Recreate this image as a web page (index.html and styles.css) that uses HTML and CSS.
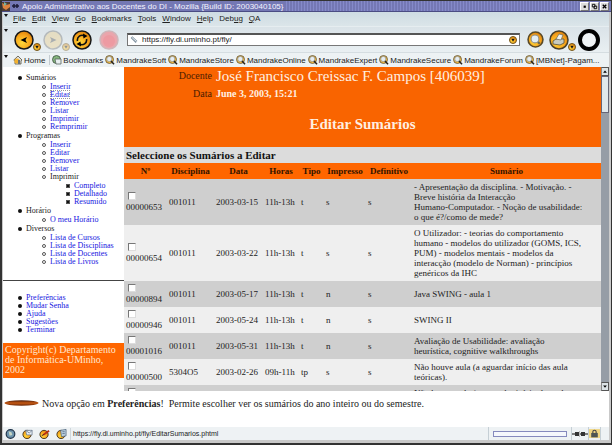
FILE: index.html
```html
<!DOCTYPE html>
<html lang="pt">
<head>
<meta charset="utf-8">
<title>Apoio Administrativo aos Docentes do DI</title>
<link rel="stylesheet" href="styles.css">
</head>
<body>
<svg class="defs" aria-hidden="true">
  <defs>
    <radialGradient id="gold" cx="40%" cy="65%" r="70%"><stop offset="0" stop-color="#ffd83a"/><stop offset=".6" stop-color="#f7a51c"/><stop offset="1" stop-color="#d97b08"/></radialGradient>
    <linearGradient id="ember" x1="0" y1="0" x2="0" y2="1"><stop offset="0" stop-color="#4a1a08"/><stop offset=".5" stop-color="#c85a14"/><stop offset="1" stop-color="#6b2808"/></linearGradient>
    <symbol id="mag" viewBox="0 0 10 10"><circle cx="4.500" cy="4.500" r="4" fill="#f6b93a" stroke="#5c5340" stroke-width=".8"/><circle cx="4.300" cy="4" r="2.600" fill="#e6edf2" stroke="#8d8f86" stroke-width=".7"/><path d="M6 6l3 3.200" stroke="#28241c" stroke-width="1.600"/></symbol>
    <symbol id="drop" viewBox="0 0 8 8"><circle cx="4" cy="4" r="3.500" fill="url(#gold)" stroke="#6f5520"/><path d="M2.300 2.800h3.400L4 5.800z" fill="#151515"/></symbol>
  </defs>
</svg>
<div class="window">
  <header class="titlebar">
    <svg class="app" viewBox="0 0 18 10"><rect width="8" height="9" y="1" fill="#4d3b32"/><path d="M0 2l4 2 4-1v3L4 9 1 7z" fill="#dc8340"/><path d="M2 1l3 2-3 2z" fill="#79b3a0"/><path d="M10 5h7M12 3v4M15 3v4" stroke="#1c1c38" stroke-width="1.500"/></svg>
    <span class="caption">Apoio Administrativo aos Docentes do DI - Mozilla {Build ID: 2003040105}</span>
    <span class="grip"></span>
    <button class="wbtn" aria-label="Minimizar"><svg viewBox="0 0 8 8"><path d="M3 3h2.500v2.500H3z"/></svg></button>
    <button class="wbtn" aria-label="Restaurar"><svg viewBox="0 0 8 8"><path d="M1.500 1.500h3v3h-3zM3.500 3.500h3v3h-3z" fill="none" stroke="#000"/></svg></button>
    <button class="wbtn" aria-label="Fechar"><svg viewBox="0 0 8 8"><path d="M2 2l4 4M6 2L2 6" stroke="#000" stroke-width="1.500"/></svg></button>
  </header>
  <nav class="menubar">
    <span class="handle"></span>
    <button><u>F</u>ile</button><button><u>E</u>dit</button><button><u>V</u>iew</button><button><u>G</u>o</button><button><u>B</u>ookmarks</button><button><u>T</u>ools</button><button><u>W</u>indow</button><button><u>H</u>elp</button><button>Deb<u>u</u>g</button><button><u>Q</u>A</button>
  </nav>
  <div class="toolbar">
    <span class="handle"></span>
    <button class="round" aria-label="Voltar"><svg viewBox="0 0 20 20"><circle cx="10" cy="10" r="9" fill="url(#gold)" stroke="#171717" stroke-width="1.500"/><path d="M6.500 10l6.500-3-1.500 3 1.500 3z"/></svg></button>
    <button class="mini" aria-label="Histórico anterior"><svg viewBox="0 0 8 8"><use href="#drop"/></svg></button>
    <button class="round faded" aria-label="Avançar"><svg viewBox="0 0 20 20"><circle cx="10" cy="10" r="9" fill="#efd08a" stroke="#777" stroke-width="1.500"/><path d="M13.500 10L7 7l1.500 3L7 13z" fill="#555"/></svg></button>
    <button class="mini faded" aria-label="Histórico seguinte"><svg viewBox="0 0 8 8"><use href="#drop"/></svg></button>
    <button class="round" aria-label="Recarregar"><svg viewBox="0 0 20 20"><circle cx="10" cy="10" r="9" fill="url(#gold)" stroke="#171717" stroke-width="1.500"/><path d="M5.500 11a4.700 4.700 0 0 1 7-5M14.500 9a4.700 4.700 0 0 1-7 5" fill="none" stroke="#111" stroke-width="1.600"/><path d="M11 3.500l4.500 2.500-4 2.500zM9 16.500L4.500 14l4-2.500z"/></svg></button>
    <button class="round stop" aria-label="Parar"><svg viewBox="0 0 20 20"><circle cx="10" cy="10" r="9" fill="#ee9098" stroke="#c9a5a9" stroke-width="1.500"/><circle cx="10" cy="11" r="6" fill="#f18089"/></svg></button>
    <div class="urlbar">
      <svg viewBox="0 0 8 8"><path d="M1.500 1.200L6.500 6" stroke="#8293a0" stroke-width="2.500"/><path d="M2 1.500l4.500 4" stroke="#e5edf2"/></svg>
      <input type="text" aria-label="Endereço" value="https://fly.di.uminho.pt/fly/">
      <button aria-label="Endereços recentes"><svg viewBox="0 0 8 8"><use href="#drop"/></svg></button>
    </div>
    <button class="search" aria-label="Procurar"><svg viewBox="0 0 16 16"><circle cx="8" cy="8" r="7" fill="url(#gold)" stroke="#5a4a28" stroke-width="1.500"/><path d="M10 10l2 2" stroke="#665" stroke-width="2"/><circle cx="7.500" cy="7.500" r="3.700" fill="#e3edf4" stroke="#8e8b80"/></svg></button>
    <button class="round" aria-label="Imprimir"><svg viewBox="0 0 20 20"><circle cx="10" cy="10" r="9" fill="url(#gold)" stroke="#4a4028" stroke-width="1.500"/><path d="M4 11l3-2 8 0v4l-4 2-7-1z" fill="#c8cbbf" stroke="#57503c" stroke-width=".8"/><path d="M7 9l3-5 4 1-2 5z" fill="#eef1ed" stroke="#6c6654" stroke-width=".7"/></svg></button>
    <button class="mini" aria-label="Opções de impressão"><svg viewBox="0 0 8 8"><use href="#drop"/></svg></button>
    <svg class="throbber" viewBox="0 0 24 24"><circle cx="12" cy="12" r="9" fill="#eff3f5" stroke="#000" stroke-width="4"/></svg>
  </div>
  <nav class="bookmarks">
    <span class="handle"></span>
    <a href="#" class="home"><svg viewBox="0 0 10 10"><path d="M.8 5L5 1l4 4-1 .7V9H2V5.500z" fill="#dfe2e0" stroke="#55503f" stroke-width=".8"/><circle cx="4" cy="6" r="2.600" fill="#f2b12f"/><path d="M5 5h2v4H5z" fill="#69737c"/></svg>Home</a>
    <a href="#" class="marks"><svg viewBox="0 0 10 10"><circle cx="4.500" cy="4.500" r="4" fill="#84b57d" stroke="#3e5141" stroke-width=".8"/><path d="M3 4h6v5H4z" fill="#e8eef0" stroke="#59665f" stroke-width=".8"/></svg>Bookmarks</a>
    <a href="#"><svg><use href="#mag"/></svg>MandrakeSoft</a>
    <a href="#"><svg><use href="#mag"/></svg>MandrakeStore</a>
    <a href="#"><svg><use href="#mag"/></svg>MandrakeOnline</a>
    <a href="#"><svg><use href="#mag"/></svg>MandrakeExpert</a>
    <a href="#"><svg><use href="#mag"/></svg>MandrakeSecure</a>
    <a href="#"><svg><use href="#mag"/></svg>MandrakeForum</a>
    <a href="#"><svg><use href="#mag"/></svg>[MBNet]-Pagam...</a>
  </nav>
  <div class="content">
    <aside class="side">
      <ul class="tree">
        <li>Sumários
          <ul><li><a href="#">Inserir</a></li><li><a href="#" class="current">Editar</a></li><li><a href="#">Remover</a></li><li><a href="#">Listar</a></li><li><a href="#">Imprimir</a></li><li><a href="#">Reimprimir</a></li></ul></li>
        <li>Programas
          <ul><li><a href="#">Inserir</a></li><li><a href="#">Editar</a></li><li><a href="#">Remover</a></li><li><a href="#">Listar</a></li><li>Imprimir
            <ul><li><a href="#">Completo</a></li><li><a href="#">Detalhado</a></li><li><a href="#">Resumido</a></li></ul></li></ul></li>
        <li>Horário
          <ul><li><a href="#">O meu Horário</a></li></ul></li>
        <li>Diversos
          <ul><li><a href="#">Lista de Cursos</a></li><li><a href="#">Lista de Disciplinas</a></li><li><a href="#">Lista de Docentes</a></li><li><a href="#">Lista de Livros</a></li></ul></li>
      </ul>
      <ul class="tree options">
        <li><a href="#">Preferências</a></li><li><a href="#">Mudar Senha</a></li><li><a href="#">Ajuda</a></li><li><a href="#">Sugestões</a></li><li><a href="#">Terminar</a></li>
      </ul>
      <p class="copyright">Copyright(c) Departamento de Informática-UMinho, 2002</p>
    </aside>
    <main class="main">
      <div class="banner">
        <dl>
          <dt>Docente</dt><dd>José Francisco Creissac F. Campos [406039]</dd>
          <dt>Data</dt><dd class="date">June 3, 2003, 15:21</dd>
        </dl>
        <h1>Editar Sumários</h1>
      </div>
      <h2>Seleccione os Sumários a Editar</h2>
      <table>
        <colgroup><col class="c-num"><col class="c-disc"><col class="c-date"><col class="c-hour"><col class="c-type"><col class="c-print"><col class="c-final"><col></colgroup>
        <thead><tr><th>Nº</th><th>Disciplina</th><th>Data</th><th>Horas</th><th>Tipo</th><th>Impresso</th><th>Definitivo</th><th>Sumário</th></tr></thead>
        <tbody>
          <tr><td><label><input type="checkbox">00000653</label></td><td>001011</td><td>2003-03-15</td><td>11h-13h</td><td>t</td><td>s</td><td>s</td><td>- Apresentação da disciplina. - Motivação. -<br>Breve história da Interacção<br>Humano-Computador. - Noção de usabilidade:<br>o que é?/como de mede?</td></tr>
          <tr><td><label><input type="checkbox">00000654</label></td><td>001011</td><td>2003-03-22</td><td>11h-13h</td><td>t</td><td>s</td><td>s</td><td>O Utilizador: - teorias do comportamento<br>humano - modelos do utilizador (GOMS, ICS,<br>PUM) - modelos mentais - modelos da<br>interacção (modelo de Norman) - princípios<br>genéricos da IHC</td></tr>
          <tr><td><label><input type="checkbox">00000894</label></td><td>001011</td><td>2003-05-17</td><td>11h-13h</td><td>t</td><td>n</td><td>s</td><td>Java SWING - aula 1</td></tr>
          <tr><td><label><input type="checkbox">00000946</label></td><td>001011</td><td>2003-05-24</td><td>11h-13h</td><td>t</td><td>n</td><td>s</td><td>SWING II</td></tr>
          <tr><td><label><input type="checkbox">00001016</label></td><td>001011</td><td>2003-05-31</td><td>11h-13h</td><td>t</td><td>n</td><td>s</td><td>Avaliação de Usabilidade: avaliação<br>heurística, cognitive walkthroughs</td></tr>
          <tr><td><label><input type="checkbox">00000500</label></td><td>5304O5</td><td>2003-02-26</td><td>09h-11h</td><td>tp</td><td>s</td><td>s</td><td>Não houve aula (a aguardar início das aula<br>teóricas).</td></tr>
          <tr class="next"><td><label><input type="checkbox" aria-label="Sumário seguinte"></label></td><td></td><td></td><td></td><td></td><td></td><td></td><td>Não houve aula (a aguardar início das aula</td></tr>
        </tbody>
      </table>
    </main>
    <div class="scrollbar">
      <button aria-label="Subir"><svg viewBox="0 0 8 8"><path d="M1.500 5.500L4 2.500l2.500 3z"/></svg></button>
      <div class="thumb"></div>
      <div class="track"></div>
      <button aria-label="Descer"><svg viewBox="0 0 8 8"><path d="M1.500 2.500L4 5.500l2.500-3z"/></svg></button>
    </div>
  </div>
  <p class="notice"><svg viewBox="0 0 36 6"><ellipse cx="18" cy="3" rx="17.500" ry="2.800" fill="url(#ember)"/></svg><span>Nova opção em <b>Preferências</b>!</span><span>Permite escolher ver os sumários do ano inteiro ou do semestre.</span></p>
  <footer class="status">
    <div class="launch">
      <button aria-label="Navegador"><svg viewBox="0 0 12 12"><circle cx="6" cy="6" r="4.700" fill="#6d94ad" stroke="#20344a" stroke-width="1.300"/><path d="M4 3l3 1 1 3-3 1z" fill="#c8d7c5"/></svg></button>
      <button aria-label="Correio"><svg viewBox="0 0 12 12"><circle cx="5.500" cy="6.500" r="4.500" fill="url(#gold)" stroke="#3d3520"/><path d="M4 2h7v5H5z" fill="#e9eff5" stroke="#627388" stroke-width=".8"/><path d="M4 2l4 3 3-3" fill="none" stroke="#627388" stroke-width=".8"/></svg></button>
      <button aria-label="Compositor"><svg viewBox="0 0 12 12"><circle cx="5.500" cy="6.500" r="4.500" fill="url(#gold)" stroke="#3d3520"/><path d="M4.500 7L11 2.500" stroke="#b92d12" stroke-width="2"/><path d="M3 8l2-1.500" stroke="#222"/></svg></button>
      <button aria-label="Contactos"><svg viewBox="0 0 12 12"><circle cx="5.500" cy="6.500" r="4.500" fill="url(#gold)" stroke="#3d3520"/><path d="M5 2l6-1v7l-5 1z" fill="#b9cfe0" stroke="#4b6278" stroke-width=".8"/><path d="M7 3.500h2.500M7 5.500h2.500" stroke="#4b6278" stroke-width=".8"/></svg></button>
    </div>
    <span class="address">https://fly.di.uminho.pt/fly/EditarSumarios.phtml</span>
    <div class="meter"><span></span></div>
    <div class="net"><svg viewBox="0 0 16 8"><path d="M0 4h16" stroke="#555" stroke-width="1.500"/><path d="M3 2h4v4H3zM9 2h4v4H9z" fill="#333"/><path d="M7.500 1v6" stroke="#bbb"/></svg></div>
    <div class="lock"><svg viewBox="0 0 10 8"><rect width="10" height="8" fill="#f0d580"/><path d="M3.500 4V2.500a1.500 1.500 0 0 1 3 0V4" fill="none" stroke="#444"/><path d="M2 3.500h6v4H2z" fill="#4e5452"/></svg></div>
    <div class="corner"></div>
  </footer>
</div>
</body>
</html>
```
FILE: styles.css
```css
* { box-sizing: border-box; }
body { margin: 0; font-family: "Liberation Serif", serif; background: #fff; color: #222; }
button { border: 0; padding: 0; margin: 0; background: none; font: inherit; color: inherit; }
a { text-decoration: none; color: inherit; }
svg { display: block; flex: none; }
ul { list-style: none; margin: 0; padding: 0; }
.defs { position: absolute; width: 0; height: 0; }

.window {
  display: flex; flex-direction: column; height: 100vh;
  border: solid #333; border-width: 1px 1px 2px 2px;
  overflow: hidden; background: #c9c9c9;
  padding: 0 2px 3px 1px;
}

.titlebar {
  display: flex; align-items: center; flex: none; height: 11px; margin: 0 -2px 0 -1px; padding-right: 2px;
  background: #7478b4; color: #f4f4ff; font: 8px/11px "Liberation Sans", sans-serif;
  border-bottom: 1px solid #4a4c83;
}
.app { width: 18px; height: 10px; margin-right: 2px; }
.caption { white-space: nowrap; }
.grip {
  flex: 1; align-self: stretch; margin-left: 3px;
  background: repeating-linear-gradient(90deg, #858aca 0 1px, transparent 1px 3px), #7478b4;
}
.wbtn { width: 9px; height: 9px; margin-left: 1px; background: #dcdcdc; border: 1px solid #777; border-top-color: #fff; border-left-color: #fff; }
.wbtn svg { width: 7px; height: 7px; }

.menubar, .toolbar, .bookmarks { display: flex; align-items: center; flex: none; font-family: "Liberation Sans", sans-serif; color: #222; }
.handle { align-self: flex-start; margin: 2px 6px 0 1px; border: 2px solid transparent; border-top: 3px solid #111; border-bottom: 0; }
.menubar { height: 14px; padding-bottom: 1px; font-size: 8px; background: linear-gradient(#cedce3, #dbe5e9); gap: 6px; }
.menubar .handle { margin-right: -1px; }
.toolbar { height: 26px; background: linear-gradient(#dae3e8, #e9eff2); border-top: 1px solid #e6edf0; }
.bookmarks { height: 15px; font-size: 8px; background: #edf2f4; border-top: 1px solid #d5dde1; gap: 2px; white-space: nowrap; overflow: hidden; }
.bookmarks .handle { margin-right: 3px; }

.round, .round svg { width: 20px; height: 20px; }
.round { margin-left: 2px; }
.toolbar .handle + .round { margin-left: 0; }
.mini, .mini svg { width: 8px; height: 8px; }
.mini { align-self: flex-end; margin-bottom: 1px; margin-left: -1px; }
.faded { opacity: .4; }
.stop { opacity: .75; margin-left: 7px; }
.urlbar {
  display: flex; align-items: center; flex: 1; height: 13px; margin: 0 7px 0 8px; padding: 0 2px;
  background: #fff; border: 1px solid #777; border-top: 2px solid #555;
}
.urlbar svg { width: 8px; height: 8px; }
.urlbar input { flex: 1; min-width: 0; border: 0; padding: 0 0 0 4px; height: 10px; background: none; font: 8px/10px "Liberation Sans", sans-serif; color: #222; outline: 0; }
.search, .search svg { width: 17px; height: 17px; }
.search { margin-right: 3px; }
.throbber { width: 24px; height: 24px; margin: 0 8px 0 1px; }

.bookmarks a { display: flex; align-items: center; gap: 1px; }
.bookmarks svg { width: 10px; height: 10px; }
.home { padding-right: 4px; border-right: 1px solid #c3cbd0; }

.content { display: flex; flex: 1; min-height: 0; background: #fff; }

.side { flex: none; width: 121px; overflow: hidden; font-size: 8px; line-height: 8px; }
.tree { padding: 7px 0 13px 23px; }
.tree li::before {
  content: ""; float: left; box-sizing: border-box; width: 4px; height: 4px; margin: 2px 0 0 -8px; border-radius: 2px; background: #111;
}
.tree ul { margin: 1px 0; padding-left: 24px; }
.tree ul li::before { background: none; border: 1px solid #555; }
.tree ul ul li::before { background: #111; border-radius: 0; }
.tree a { color: #1616e0; }
.tree .current { outline: 1px dotted #999; outline-offset: -1px; }
.options { border-top: 1px solid #444; padding: 13px 0 9px 23px; }
.copyright { margin: 0; padding: 2px 3px 3px 2px; background: #ff6600; color: #ffe6cf; font-size: 10px; line-height: 10px; }

.main { flex: 1; min-width: 0; overflow: hidden; background: #dcdcdc; }
.banner { height: 80px; background: #f96400; }
dl { display: grid; grid-template-columns: 88px 1fr; column-gap: 4px; align-items: center; margin: 0; line-height: 18px; }
dt { text-align: right; font-size: 10px; color: #4b1c00; }
dd { margin: 0; font-size: 15px; color: #fff0e2; white-space: nowrap; }
dd.date { font-size: 10px; font-weight: bold; }
h1 { margin: 12px 0 0; text-align: center; font-size: 15px; line-height: 18px; color: #ffefe0; }
h2 { margin: 0; padding-left: 2px; font-size: 11px; line-height: 16px; color: #111; }

table { width: 100%; table-layout: fixed; border-collapse: collapse; font-size: 9px; line-height: 10px; }
.c-num { width: 43px; } .c-disc { width: 47px; } .c-date { width: 49px; } .c-hour { width: 36px; }
.c-type { width: 25px; } .c-print { width: 42px; } .c-final { width: 46px; }
th { padding: 3px 0; background: #ff6600; color: #331400; }
td { padding: 3px 0 3px 2px; white-space: nowrap; }
tbody tr { background: #efefef; }
tbody tr:nth-child(odd) { background: #cfcfcf; }
.next td { vertical-align: top; }
td label { display: block; }
td input { appearance: none; display: block; width: 8px; height: 8px; margin: 0 0 2px 2px; background: #fff; border: 1px solid #ddd; border-top-color: #777; border-left-color: #777; }

.scrollbar { display: flex; flex-direction: column; flex: none; width: 8px; background: #969da6; }
.scrollbar button { width: 8px; height: 9px; background: #dce3e6; border: 1px solid #555; border-left-color: #888; }
.scrollbar button svg { width: 6px; height: 7px; }
.thumb { height: 37px; background: #e0e8eb; border: 1px solid #667; }
.track { flex: 1; }

.notice { display: flex; align-items: center; gap: 3px; flex: none; height: 36px; margin: 0; padding: 0 0 12px 1px; background: #fff; font-size: 10px; white-space: nowrap; }
.notice svg { width: 35px; height: 6px; }
.notice span + span { margin-left: 2px; }

.status { display: flex; align-items: center; flex: none; height: 13px; background: #eef2f4; font: 7px/13px "Liberation Sans", sans-serif; }
.launch { display: flex; gap: 6px; padding: 0 3px 0 2px; border-right: 1px solid #cfd7db; }
.launch svg { width: 11px; height: 12px; }
.address { flex: 1; padding-left: 2px; }
.meter, .net, .lock { display: flex; align-items: center; align-self: stretch; border-left: 1px solid #c5cfd5; }
.meter { padding: 0 4px; }
.meter span { width: 74px; height: 6px; background: #f5f7fc; border: 1px solid #8589bd; }
.net svg { width: 16px; height: 8px; }
.lock svg { width: 11px; height: 9px; }
.corner { align-self: stretch; width: 9px; border-left: 1px solid #c5cfd5; }
```
